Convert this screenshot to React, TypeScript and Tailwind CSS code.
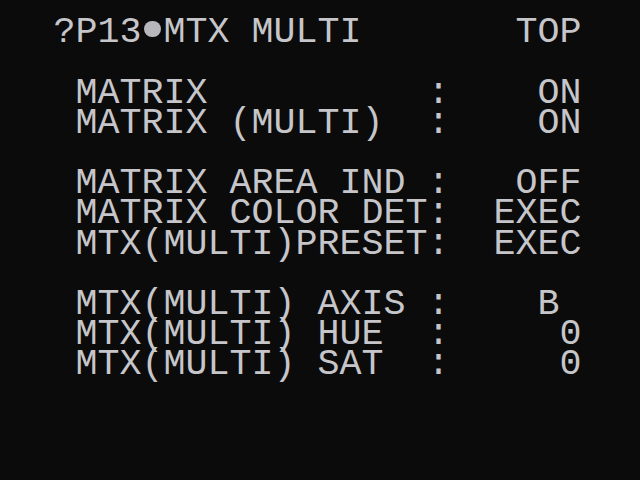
type Row = { label: string; value: string } | null

const rows: Row[] = [
  null,
  { label: "MATRIX", value: "ON" },
  { label: "MATRIX (MULTI)", value: "ON" },
  null,
  { label: "MATRIX AREA IND", value: "OFF" },
  { label: "MATRIX COLOR DET", value: "EXEC" },
  { label: "MTX(MULTI)PRESET", value: "EXEC" },
  null,
  { label: "MTX(MULTI) AXIS", value: "B " },
  { label: "MTX(MULTI) HUE", value: "0" },
  { label: "MTX(MULTI) SAT", value: "0" },
]

// OSD is a 24-column character grid, 22px per cell
const line = (r: { label: string; value: string }) =>
  " " + r.label.padEnd(16) + ":" + r.value.padStart(6)

export default function App() {
  return (
    <div className="w-[640px] h-[480px] bg-[#0b0b0b] overflow-hidden">
      <div className="pl-[53.5px] pt-[17.3px] font-['Liberation_Mono',monospace] text-[36.67px] leading-[30.2px] text-[#c6c6ca] whitespace-pre">
        {/* title */}
        <div>
          ?P13
          <span className="inline-block w-[17px] h-[16px] mx-[2.5px] rounded-full bg-[#b8b8bc] align-[5px]" />
          MTX MULTI{"       "}TOP
        </div>
        {rows.map((r, i) => (
          <div key={i} className="h-[30.2px]">
            {r ? line(r) : " "}
          </div>
        ))}
      </div>
    </div>
  )
}
